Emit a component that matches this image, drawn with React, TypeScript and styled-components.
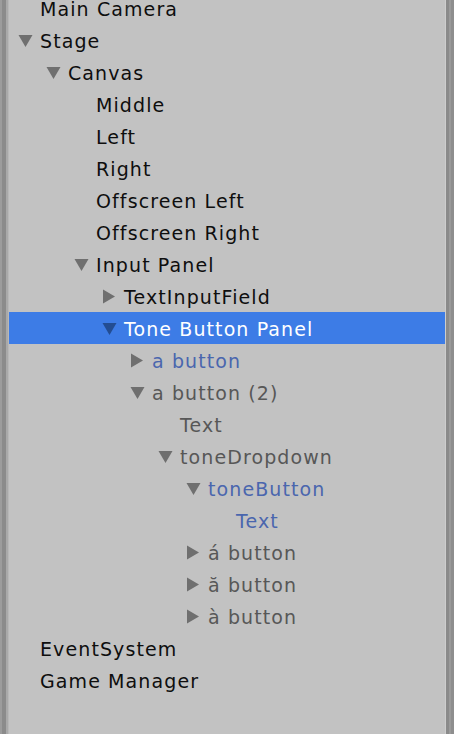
import { FunctionComponent } from "react";
import styled, { createGlobalStyle } from "styled-components";

const GlobalStyle = createGlobalStyle`
  html, body {
    margin: 0;
    padding: 0;
    background: #c2c2c2;
    overflow: hidden;
  }
`;

type Tone = "normal" | "inactive" | "prefab" | "selected";
type Arrow = "none" | "open" | "closed";

interface Node {
  label: string;
  depth: number;
  arrow: Arrow;
  tone: Tone;
}

const nodes: Node[] = [
  { label: "Main Camera", depth: 0, arrow: "none", tone: "normal" },
  { label: "Stage", depth: 0, arrow: "open", tone: "normal" },
  { label: "Canvas", depth: 1, arrow: "open", tone: "normal" },
  { label: "Middle", depth: 2, arrow: "none", tone: "normal" },
  { label: "Left", depth: 2, arrow: "none", tone: "normal" },
  { label: "Right", depth: 2, arrow: "none", tone: "normal" },
  { label: "Offscreen Left", depth: 2, arrow: "none", tone: "normal" },
  { label: "Offscreen Right", depth: 2, arrow: "none", tone: "normal" },
  { label: "Input Panel", depth: 2, arrow: "open", tone: "normal" },
  { label: "TextInputField", depth: 3, arrow: "closed", tone: "normal" },
  { label: "Tone Button Panel", depth: 3, arrow: "open", tone: "selected" },
  { label: "a button", depth: 4, arrow: "closed", tone: "prefab" },
  { label: "a button (2)", depth: 4, arrow: "open", tone: "inactive" },
  { label: "Text", depth: 5, arrow: "none", tone: "inactive" },
  { label: "toneDropdown", depth: 5, arrow: "open", tone: "inactive" },
  { label: "toneButton", depth: 6, arrow: "open", tone: "prefab" },
  { label: "Text", depth: 7, arrow: "none", tone: "prefab" },
  { label: "á button", depth: 6, arrow: "closed", tone: "inactive" },
  { label: "ă button", depth: 6, arrow: "closed", tone: "inactive" },
  { label: "à button", depth: 6, arrow: "closed", tone: "inactive" },
  { label: "EventSystem", depth: 0, arrow: "none", tone: "normal" },
  { label: "Game Manager", depth: 0, arrow: "none", tone: "normal" },
];

const textColor: Record<Tone, string> = {
  normal: "#0e0e0e",
  inactive: "#575757",
  prefab: "#4a66ae",
  selected: "#ffffff",
};

const Window = styled.div`
  width: 454px;
  height: 734px;
  display: flex;
  background: #c2c2c2;
  overflow: hidden;
`;

const LeftEdge = styled.div`
  width: 9px;
  flex-shrink: 0;
  background: linear-gradient(
    90deg,
    #9c9c9c 0px,
    #9c9c9c 2px,
    #8b8b8b 2px,
    #8b8b8b 6px,
    #a9a9a9 6px,
    #a9a9a9 8px,
    #b8b8b8 8px
  );
`;

const RightEdge = styled.div`
  width: 9px;
  flex-shrink: 0;
  background: linear-gradient(
    90deg,
    #cdcdcd 0px,
    #cdcdcd 1px,
    #8a8a8a 1px,
    #8a8a8a 4px,
    #9a9a9a 4px,
    #9a9a9a 6px,
    #8e8e8e 6px
  );
`;

const Tree = styled.ul`
  flex: 1;
  list-style: none;
  margin: -8px 0 0;
  padding: 0;
`;

const Row = styled.li<{ $selected: boolean }>`
  height: 32px;
  display: flex;
  align-items: center;
  background: ${(p) => (p.$selected ? "#3d7ce6" : "transparent")};
`;

const Indent = styled.div<{ $depth: number }>`
  width: ${(p) => 9 + p.$depth * 28}px;
  flex-shrink: 0;
`;

const Toggle = styled.div`
  width: 22px;
  height: 32px;
  display: flex;
  align-items: center;
  flex-shrink: 0;
`;

const Label = styled.span<{ $tone: Tone }>`
  font-family: "DejaVu Sans", "Liberation Sans", sans-serif;
  font-size: 19px;
  letter-spacing: 1.1px;
  color: ${(p) => textColor[p.$tone]};
  white-space: nowrap;
  padding-top: 1px;
`;

const ArrowIcon: FunctionComponent<{ arrow: Arrow; selected: boolean }> = ({
  arrow,
  selected,
}) => {
  if (arrow === "none") return null;
  const fill = selected ? "#234d92" : "#6f6f6f";
  return (
    <svg width="15" height="15" viewBox="0 0 15 15">
      {arrow === "open" ? (
        <polygon points="0.5,2 14.5,2 7.5,14" fill={fill} />
      ) : (
        <polygon points="1,0.5 13,7.5 1,14.5" fill={fill} />
      )}
    </svg>
  );
};

const App: FunctionComponent = () => {
  return (
    <>
      <GlobalStyle />
      <Window>
        <LeftEdge />
        <Tree>
          {nodes.map((n, i) => (
            <Row key={i} $selected={n.tone === "selected"}>
              <Indent $depth={n.depth} />
              <Toggle>
                <ArrowIcon arrow={n.arrow} selected={n.tone === "selected"} />
              </Toggle>
              <Label $tone={n.tone}>{n.label}</Label>
            </Row>
          ))}
        </Tree>
        <RightEdge />
      </Window>
    </>
  );
};

export default App;
